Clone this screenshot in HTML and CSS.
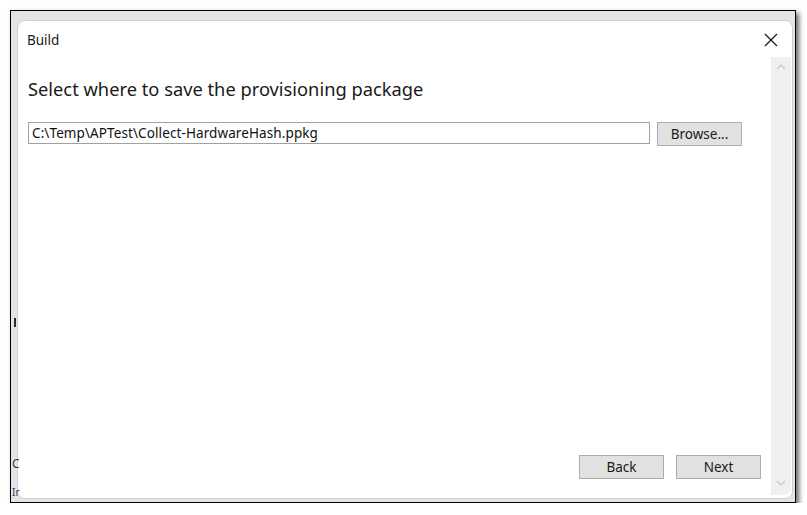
FILE: index.html
```html
<!DOCTYPE html>
<html>
<head>
<meta charset="utf-8">
<link rel="stylesheet" href="styles.css">
</head>
<body>
<div class="frame">
  <div class="backdrop">
    <span class="mark mark-a"></span>
    <span class="mark mark-b">C</span>
    <span class="mark mark-c">Ir</span>
  </div>
  <div class="dialog">
    <div class="titlebar">
      <span class="title">Build</span>
      <svg class="close" width="14" height="14" viewBox="0 0 14 14"><path d="M1 1 L13 13 M13 1 L1 13" stroke="#1a1a1a" stroke-width="1.3" fill="none"/></svg>
    </div>
    <div class="body">
      <div class="main">
        <h1 class="heading">Select where to save the provisioning package</h1>
        <div class="pathrow">
          <div class="input">C:\Temp\APTest\Collect-HardwareHash.ppkg</div>
          <button class="btn browse">Browse...</button>
        </div>
        <div class="footer">
          <button class="btn">Back</button>
          <button class="btn">Next</button>
        </div>
      </div>
      <div class="scrollbar">
        <svg width="10" height="6" viewBox="0 0 10 6"><path d="M1 5 L5 1 L9 5" stroke="#c8c8c8" stroke-width="1.2" fill="none"/></svg>
        <svg width="10" height="6" viewBox="0 0 10 6"><path d="M1 1 L5 5 L9 1" stroke="#c8c8c8" stroke-width="1.2" fill="none"/></svg>
      </div>
    </div>
  </div>
</div>
</body>
</html>
```
FILE: styles.css
```css
html, body { margin: 0; padding: 0; background: #fff; }
body { padding: 10px 0 0 10px; font-family: "Noto Sans", "Open Sans", sans-serif; color: #1a1a1a; }
.frame {
  position: relative;
  box-sizing: border-box;
  width: 786px;
  height: 493px;
  border: 1px solid #000;
  background: #e4e4e4;
  box-shadow: 3px 3px 5px rgba(0,0,0,0.6);
  padding: 9px 0 0 6px;
}
.backdrop { position: absolute; left: 0; top: 0; width: 6px; height: 100%; }
.mark { position: absolute; left: 3px; font-size: 12px; color: #233a66; line-height: 1; }
.mark-a { top: 307px; width: 2px; height: 9px; background: #3a2a1a; }
.mark-b { top: 447px; left: 1px; }
.mark-c { top: 476px; left: 1px; font-size: 10px; }
.dialog {
  box-sizing: border-box;
  width: 776px;
  height: 479px;
  background: #fff;
  border: 1px solid #d0d0d0;
  border-radius: 8px 8px 8px 8px;
  display: flex;
  flex-direction: column;
  overflow: hidden;
}
.titlebar {
  height: 36px;
  display: flex;
  align-items: center;
  justify-content: space-between;
  padding: 0 14px 0 9px;
  flex-shrink: 0;
}
.title { font-size: 13.5px; color: #1a1a1a; margin-top: 1px; }
.close { margin-top: 1px; }
.body { flex: 1; display: flex; min-height: 0; }
.main {
  flex: 1;
  display: flex;
  flex-direction: column;
  padding: 18px 10px 19px 10px;
}
.heading {
  margin: 0;
  font-weight: normal;
  font-size: 18.3px;
  line-height: 28px;
  color: #1a1a1a;
}
.pathrow { display: flex; align-items: flex-start; margin-top: 19px; }
.input {
  box-sizing: border-box;
  width: 622px;
  height: 22px;
  border: 1px solid #a0a0a0;
  font-size: 13.5px;
  letter-spacing: 0.1px;
  line-height: 20px;
  padding-left: 3px;
  color: #111;
  white-space: nowrap;
}
.btn {
  box-sizing: border-box;
  width: 85px;
  height: 24px;
  background: #e1e1e1;
  border: 1px solid #adadad;
  font-family: "Noto Sans", "Open Sans", sans-serif;
  font-size: 13.5px;
  color: #1a1a1a;
  padding: 0;
  line-height: 20px;
}
.browse { margin-left: 7px; }
.footer { margin-top: auto; display: flex; justify-content: flex-end; gap: 12px; }
.scrollbar {
  width: 20px;
  margin: 0 1px 3px 0;
  background: #f0f0f0;
  border-radius: 0 0 6px 0;
  display: flex;
  flex-direction: column;
  justify-content: space-between;
  align-items: center;
  padding: 7px 0 9px;
  box-sizing: border-box;
}
```
